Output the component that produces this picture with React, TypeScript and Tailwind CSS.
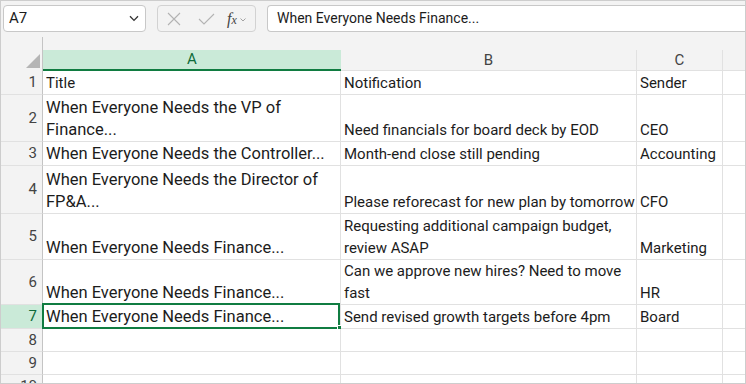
import React from 'react';

// Spreadsheet snapshot: name box, formula bar, grid with the active cell A7

interface Row {
  n: number;
  h: string;
  a: string[];
  b: string[];
  c: string[];
  active?: boolean;
}

const rows: Row[] = [
  { n: 1, h: 'h-[24px]', a: ['Title'], b: ['Notification'], c: ['Sender'] },
  {
    n: 2,
    h: 'h-[47px]',
    a: ['When Everyone Needs the VP of', 'Finance...'],
    b: ['Need financials for board deck by EOD'],
    c: ['CEO'],
  },
  {
    n: 3,
    h: 'h-[24px]',
    a: ['When Everyone Needs the Controller...'],
    b: ['Month-end close still pending'],
    c: ['Accounting'],
  },
  {
    n: 4,
    h: 'h-[48px]',
    a: ['When Everyone Needs the Director of', 'FP&A...'],
    b: ['Please reforecast for new plan by tomorrow'],
    c: ['CFO'],
  },
  {
    n: 5,
    h: 'h-[46px]',
    a: ['When Everyone Needs Finance...'],
    b: ['Requesting additional campaign budget,', 'review ASAP'],
    c: ['Marketing'],
  },
  {
    n: 6,
    h: 'h-[45px]',
    a: ['When Everyone Needs Finance...'],
    b: ['Can we approve new hires? Need to move', 'fast'],
    c: ['HR'],
  },
  {
    n: 7,
    h: 'h-[24px]',
    a: ['When Everyone Needs Finance...'],
    b: ['Send revised growth targets before 4pm'],
    c: ['Board'],
    active: true,
  },
  { n: 8, h: 'h-[23px]', a: [], b: [], c: [] },
  { n: 9, h: 'h-[23px]', a: [], b: [], c: [] },
  { n: 10, h: 'h-[23px]', a: [], b: [], c: [] },
];

const Cell: React.FC<{ lines: string[]; h: string; big?: boolean; active?: boolean }> = ({
  lines,
  h,
  big,
  active,
}) => (
  <div
    className={`relative flex ${h} flex-col justify-end border-r border-b border-[#e1e1e1] bg-white pl-[3px] leading-[22px] whitespace-nowrap ${
      big ? 'text-[16.5px]' : 'text-[15px]'
    }`}
  >
    <div className="overflow-hidden">
      {lines.map((l) => (
        <div key={l}>{l}</div>
      ))}
    </div>
    {active && (
      <>
        <div className="absolute -left-[1px] -top-[2px] right-0 -bottom-[1px] border-2 border-[#107c41]" />
        <div className="absolute -right-[2px] -bottom-[2px] h-[5px] w-[5px] border border-white bg-[#107c41]" />
      </>
    )}
  </div>
);

export default function App() {
  return (
    <div className="w-[746px] h-[384px] overflow-hidden border border-[#cdcdcd] bg-[#f3f3f3] font-['Roboto',sans-serif] text-[#1c1c1c]">
      {/* Toolbar */}
      <div className="flex h-[36px] gap-[11px] pt-[4px] pl-[2px]">
        <div className="flex h-[27px] w-[143px] items-center justify-between rounded-[4px] border border-[#c8c8c8] bg-white pl-[5px] pr-[5px] text-[15px]">
          <span>A7</span>
          <svg width="10" height="7" viewBox="0 0 10 7" className="mr-[1px]">
            <path d="M1 1.2 L5 5.4 L9 1.2" fill="none" stroke="#333" strokeWidth="1.3" />
          </svg>
        </div>
        <div className="flex h-[27px] w-[99px] items-center rounded-[4px] border border-[#d2d2d2] bg-[#f3f3f3] pl-[9px]">
          <svg width="14" height="14" viewBox="0 0 14 14">
            <path d="M1 1 L13 13 M13 1 L1 13" stroke="#b3b3b3" strokeWidth="1.1" />
          </svg>
          <svg width="17" height="12" viewBox="0 0 17 12" className="ml-[17px]">
            <path d="M1 6 L6 11 L16 1" fill="none" stroke="#b3b3b3" strokeWidth="1.1" />
          </svg>
          <span className="ml-[12px] font-['Liberation_Serif',serif] text-[16px] italic leading-none text-[#444]">
            f<span className="text-[12px]">x</span>
          </span>
          <svg width="6" height="4" viewBox="0 0 6 4" className="ml-[3px] mt-[2px]">
            <path d="M0.5 0.5 L3 3 L5.5 0.5" fill="none" stroke="#999" strokeWidth="0.9" />
          </svg>
        </div>
        <div className="flex h-[27px] flex-1 items-center rounded-l-[4px] border border-r-0 border-[#c8c8c8] bg-white pl-[9px] text-[14px]">
          When Everyone Needs Finance...
        </div>
      </div>

      {/* Sheet */}
      <div className="grid grid-cols-[42px_298px_296px_86px_1fr]">
        {/* Column header */}
        <div className="flex h-[34px] items-end justify-end border-r border-[#c4c4c4] pr-[2px] pb-[3px]">
          <svg width="14" height="14" viewBox="0 0 14 14">
            <path d="M14 0 L14 14 L0 14 Z" fill="#b5b5b5" />
          </svg>
        </div>
        <div className="flex h-[21px] self-end items-center justify-center border-b-2 border-[#107c41] bg-[#caead8] text-[15px] text-[#0e6b3a]">
          A
        </div>
        <div className="flex h-[21px] self-end items-center justify-center border-r border-b border-[#e1e1e1] text-[15px] text-[#444]">
          B
        </div>
        <div className="flex h-[21px] self-end items-center justify-center border-r border-b border-[#e1e1e1] text-[15px] text-[#444]">
          C
        </div>
        <div className="h-[21px] self-end border-b border-[#e1e1e1]" />

        {rows.map((r) => (
          <React.Fragment key={r.n}>
            <div
              className={`flex ${r.h} items-center justify-end border-r border-b border-r-[#c4c4c4] border-b-[#e1e1e1] pr-[5px] text-[15px] ${
                r.active ? 'bg-[#caead8] text-[#0e6b3a]' : 'text-[#444]'
              }`}
            >
              {r.n}
            </div>
            <Cell lines={r.a} h={r.h} big={r.n > 1} active={r.active} />
            <Cell lines={r.b} h={r.h} />
            <Cell lines={r.c} h={r.h} />
            <div className={`${r.h} border-b border-[#e1e1e1] bg-white`} />
          </React.Fragment>
        ))}
      </div>
    </div>
  );
}
